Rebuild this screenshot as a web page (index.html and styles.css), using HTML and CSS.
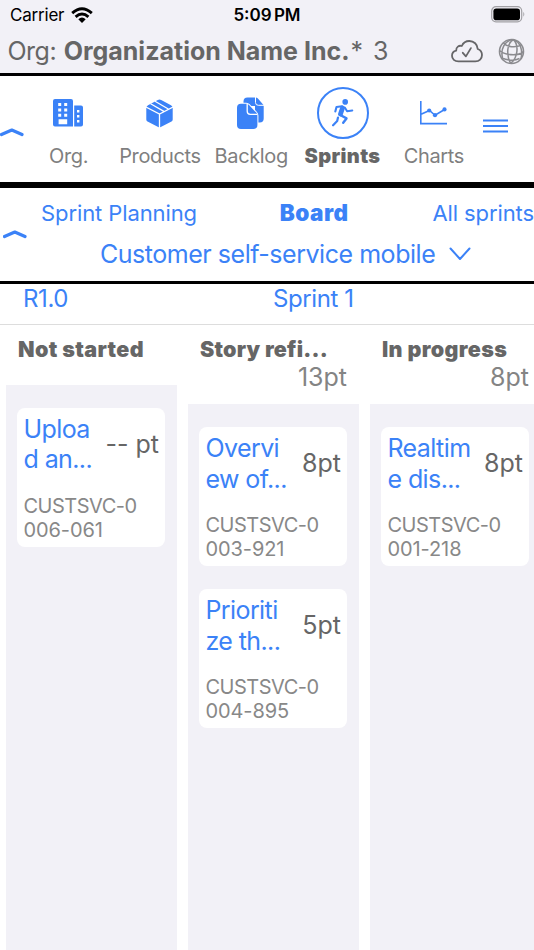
FILE: index.html
```html
<!DOCTYPE html>
<html lang="en">
<head>
<meta charset="utf-8">
<meta name="viewport" content="width=device-width">
<title>Sprint board</title>
<link rel="stylesheet" href="styles.css">
</head>
<body>
<div class="app">
  <header class="header">
    <div class="status">
      <div class="carrier"><span class="carrier-name">Carrier</span>
        <svg class="wifi" width="22" height="17" viewBox="0 0 22 17"><g fill="none" stroke="#000" stroke-width="2.9"><path d="M1.2 6.1Q11-2.5 20.8 6.1"/><path d="M4.6 9.9Q11 4.2 17.4 9.9"/></g><path d="M7.3 12.2Q11 9 14.7 12.2L11 16Z"/></svg>
      </div>
      <span class="clock">5:09 PM</span>
      <svg class="battery" width="35" height="17" viewBox="0 0 35 17"><rect x=".7" y=".7" width="30" height="15.2" rx="4.3" fill="none" stroke="#a2a1a5" stroke-width="1.2"/><rect x="2.4" y="2.4" width="26.6" height="11.8" rx="2.8"/><path d="M32.3 5.8q2 2.5 0 5Z" fill="#a2a1a5"/></svg>
    </div>
    <div class="org">
      <span class="org-label">Org:</span>
      <span class="org-name">Organization Name Inc.</span>
      <span class="star">*</span>
      <span class="count">3</span>
      <svg class="cloud" width="32" height="23" viewBox="0 0 32 23" fill="none" stroke="#666668" stroke-width="1.8" stroke-linecap="round" stroke-linejoin="round"><path d="M7.4 21.4C3.7 21.4 1 19.1 1 15.8c0-2.7 1.6-4.7 4.2-5.2C5 7.1 8 5 10.8 6 12.2 2.8 15 1 18.3 1c4.6 0 8.2 3.4 8.4 8 2.5.9 4.3 3.2 4.3 6 0 3.7-2.8 6.4-6.6 6.4Z"/><path d="m11.8 12.8 3.1 3.6 5-8.3"/></svg>
      <svg class="globe" width="27" height="27" viewBox="0 0 27 27" fill="none" stroke="#8b8b8f" stroke-width="1.55"><circle cx="13.5" cy="13.5" r="12"/><path d="M15.5 1.6C9 5 8 16 12.5 25.4M15.5 1.6C21 7 20 20 12.5 25.4M15.5 1.6C7 2 1.5 11 5 21.8M15.5 1.6c6.7 2.6 9.6 10 7.5 19.2M5.5 5C9 9 17.5 10.3 23.5 6.8M1.5 12.5C6 17 19 18.5 25.5 14M3.5 19.7c5 3 13 3.3 18 .8"/></svg>
    </div>
  </header>

  <nav class="nav">
    <svg class="fold" width="24" height="10" viewBox="0 0 24 10"><path d="M1.5 7.5 11.8 3 22 7.5"/></svg>
    <a class="tab"><span class="icon"><svg width="31" height="28" viewBox="0 0 31 28" fill="#3b82f7"><path fill-rule="evenodd" d="M2 0h16q2 0 2 2v25.5H2q-2 0-2-2V2q0-2 2-2ZM5.200 4v3h3V4Zm6 0v3h3V4Zm-6 5.500v3h3v-3Zm6 0v3h3v-3Zm-6 5.300v3h3v-3Zm6 0v3h3v-3ZM5.600 20.300v5h8.600v-5Z"/><path fill-rule="evenodd" d="M21.200 6.500H28q2 0 2 2v17q0 2-2 2h-6.800ZM24 11v2.400h2.400V11Zm0 5v2.400h2.400V16Zm0 5v2.400h2.400V21Z"/></svg></span><span class="label">Org.</span></a>
    <a class="tab"><span class="icon"><svg width="27" height="29" viewBox="0 0 27 29"><path d="M13.5.5q.8 0 1.700.5L25 6.200q1.700 1 1.700 2.800v11.500q0 1.300-1.200 2L14.800 28q-1.300.7-2.600 0L1.500 22.500Q.3 21.800.3 20.500V9q0-1.800 1.700-2.800L11.800 1q.9-.5 1.700-.5Z" fill="#3b82f7"/><path d="M0 8.100l13.500 6.900L27 8.100M13.500 15v14M4.600 4.700l13.300 7.700M9 2.300l13.300 7.700" fill="none" stroke="#fff" stroke-width="1.300"/></svg></span><span class="label">Products</span></a>
    <a class="tab"><span class="icon"><svg width="28" height="33" viewBox="0 0 28 33" fill="#3b82f7"><path d="M6.500 9V4.500q0-4 4-4h8.200q1.300 0 2.200 1l5.200 6q.6.700.6 1.800V21.500q0 4-4 4H18V9Z"/><path d="M18.500 0v5.500q0 2.800 2.800 2.800h6" fill="none" stroke="#fff"/><path d="M4 6.700h5.200q1.600 0 2.800 1.300l7.200 7.600q1.200 1.200 1.200 3v9.400q0 4-4 4H4q-4 0-4-4V10.700q0-4 4-4Z" stroke="#fff" stroke-width="2" paint-order="stroke"/><path d="M10.200 6.800v7.500q0 3 3 3h7" fill="none" stroke="#fff" stroke-width="1.300"/></svg></span><span class="label">Backlog</span></a>
    <a class="tab active"><span class="icon ring"><svg width="22" height="28" viewBox="0 0 22 28" fill="none" stroke="#3b82f7" stroke-linecap="round" stroke-linejoin="round"><circle cx="13.2" cy="2.9" r="2.8" fill="#3b82f7" stroke="none"/><path d="m10.5 9-2 6" stroke-width="4.8"/><path d="M10 7.300 4.500 8 3.300 12.500" stroke-width="2.100"/><path d="m12.800 8.500 2.300 3.800 5.200-.8" stroke-width="2"/><path d="m8.800 16.200 5.700 3.200-3.300 4.300" stroke-width="2.400"/><path d="m6 18.600-.8 3.500-4.100 4.200" stroke-width="2.200"/></svg></span><span class="label">Sprints</span></a>
    <a class="tab"><span class="icon"><svg width="27" height="24" viewBox="0 0 27 24" fill="none" stroke="#3b82f7" stroke-width="1.6"><path d="M.8 0v22.600H27M1 13.300l8.500-3.800 5.500 4.800 10-6"/><g fill="#3b82f7" stroke="none"><circle cx="9.2" cy="9.5" r="2.1"/><circle cx="15" cy="14.2" r="2.1"/><circle cx="24.5" cy="8.4" r="2.1"/></g></svg></span><span class="label">Charts</span></a>
    <svg class="menu" width="25" height="14" viewBox="0 0 25 14" stroke="#3b82f7" stroke-width="1.9"><path d="M0 1.500h25M0 7h25M0 12.500h25"/></svg>
  </nav>

  <section class="sub">
    <svg class="fold" width="24" height="10" viewBox="0 0 24 10"><path d="M1.5 7.5 11.8 3 22 7.5"/></svg>
    <div class="subtabs"><a>Sprint Planning</a><a class="current">Board</a><a>All sprints</a></div>
    <div class="picker"><span>Customer self-service mobile</span><svg width="22" height="14" viewBox="0 0 22 14" fill="none" stroke="#3b82f7" stroke-width="2" stroke-linecap="round" stroke-linejoin="round"><path d="M1.5 1.5 11 12 20.5 1.5"/></svg></div>
  </section>

  <div class="release"><a>R1.0</a><a>Sprint 1</a></div>

  <main class="board">
    <section class="column">
      <h2>Not started</h2>
      <div class="lane">
        <article class="card"><div class="top"><a>Uploa<br>d an...</a><b>-- pt</b></div><p>CUSTSVC-0<br><span>006-061</span></p></article>
      </div>
    </section>
    <section class="column">
      <h2>Story refi...</h2><div class="total">13pt</div>
      <div class="lane">
        <article class="card"><div class="top"><a>Overvi<br>ew of...</a><b>8pt</b></div><p>CUSTSVC-0<br><span>003-921</span></p></article>
        <article class="card"><div class="top"><a>Prioriti<br>ze th...</a><b>5pt</b></div><p>CUSTSVC-0<br><span>004-895</span></p></article>
      </div>
    </section>
    <section class="column">
      <h2>In progress</h2><div class="total">8pt</div>
      <div class="lane">
        <article class="card"><div class="top"><a>Realtim<br>e dis...</a><b>8pt</b></div><p>CUSTSVC-0<br><span>001-218</span></p></article>
      </div>
    </section>
  </main>
</div>
</body>
</html>
```
FILE: styles.css
```css
* { box-sizing: border-box; }
body { margin: 0; background: #fff; font-family: Inter, "Liberation Sans", sans-serif; color: #666; }
.app { width: 534px; height: 950px; overflow: hidden; display: flex; flex-direction: column; }
a { color: #3b82f7; white-space: nowrap; }
svg { display: block; flex: none; }
span { white-space: nowrap; }

.header { height: 76px; flex: none; background: #f2f1f7; border-bottom: 3px solid #000; }
.status { height: 30px; display: grid; grid-template-columns: 1fr auto 1fr; align-items: center; padding: 0 8px 0 10px; color: #000; font-size: 17px; line-height: 30px; }
.carrier { display: flex; align-items: center; gap: 7px; }
.carrier-name { letter-spacing: -.2px; }
.clock { font-weight: 600; word-spacing: -2px; margin-right: 2px; }
.battery { justify-self: end; margin-top: -2px; }
.org { height: 43px; display: flex; align-items: center; padding: 0 9px 0 7.5px; font-size: 25px; line-height: 43px; }
.org-label { letter-spacing: -.5px; }
.org-name { font-weight: 700; margin-left: 7.5px; }
.star { margin-left: 1px; }
.count { margin-left: 10px; }
.cloud { margin-left: auto; }
.globe { margin-left: 15px; }

.nav { height: 112px; flex: none; display: flex; border-bottom: 6px solid #000; }
.fold { fill: none; stroke: #3b82f7; stroke-width: 3.2; stroke-linecap: round; stroke-linejoin: round; }
.nav .fold { margin-top: 51px; margin-right: -1px; }
.tab { width: 91.3px; display: flex; flex-direction: column; align-items: center; }
.icon { width: 52px; height: 52px; margin-top: 11px; display: flex; align-items: center; justify-content: center; }
.ring { border: 2px solid #3b82f7; border-radius: 50%; }
.label { font-size: 20px; line-height: 24px; margin-top: 5px; color: #7f7f7f; letter-spacing: -.35px; }
.active .label { font-weight: 900; color: #666; letter-spacing: .35px; }
.menu { margin: 43px 0 0 4px; }

.sub { height: 96px; flex: none; display: grid; grid-template-columns: 41px 1fr; grid-template-rows: 46px 40px; border-bottom: 3px solid #000; }
.sub .fold { grid-row: 1 / 3; margin: 41px 0 0 3px; }
.subtabs { display: flex; justify-content: space-between; font-size: 22px; line-height: 50px; letter-spacing: -.1px; }
.current { font-weight: 900; font-size: 22.5px; letter-spacing: .5px; margin-right: 1px; }
.picker { display: flex; align-items: center; gap: 14px; margin-left: 59px; font-size: 25px; line-height: 40px; color: #3b82f7; letter-spacing: -.47px; }
.release { height: 41px; flex: none; display: grid; grid-template-columns: 250px 1fr; padding-left: 23px; border-bottom: 1px solid #ddd; font-size: 24px; line-height: 29px; letter-spacing: -.4px; }

.board { flex: 1; display: flex; gap: 11px; padding-left: 6px; width: 560px; }
.column { width: 171px; flex: none; display: flex; flex-direction: column; }
h2 { margin: 11px 0 0 12px; font-size: 21.5px; line-height: 26px; font-weight: 900; letter-spacing: .35px; white-space: nowrap; }
.column:nth-child(2) h2 { letter-spacing: .2px; }
.total { height: 30px; line-height: 30px; font-size: 25px; text-align: right; padding-right: 12px; color: #848484; }
.lane { flex: 1; margin-top: 12px; padding: 23px 12px 0 11px; background: #f2f1f7; display: flex; flex-direction: column; gap: 23px; }
.column:first-child .lane { margin-top: 23px; padding-top: 22.5px; }
.card { height: 139px; flex: none; border-radius: 8px; background: #fff; padding: 6px 6px 0 6.5px; }
.top { display: flex; justify-content: space-between; align-items: center; font-size: 25px; line-height: 30.5px; }
.top a { letter-spacing: -.6px; }
.top b { font-weight: 400; white-space: nowrap; }
.card p { margin: 19px 0 0; font-size: 20px; line-height: 24px; letter-spacing: -.5px; color: #888; }
.card p span { letter-spacing: -.1px; }
```
